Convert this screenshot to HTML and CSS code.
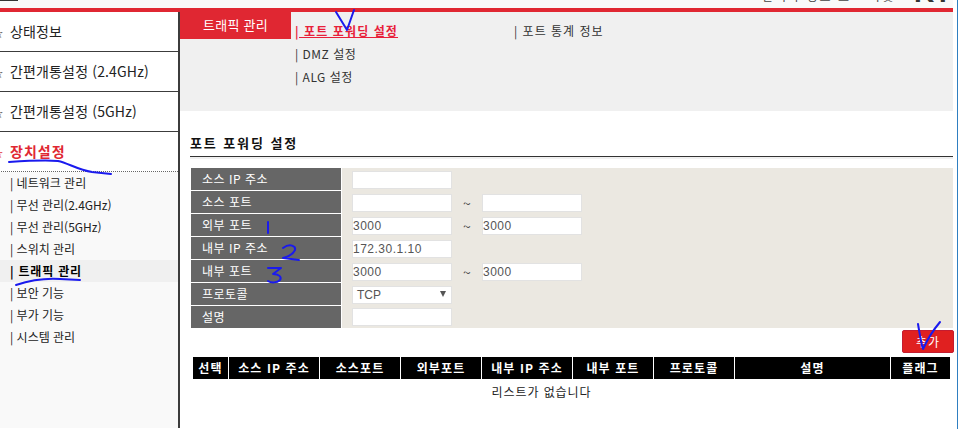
FILE: index.html
```html
<!DOCTYPE html>
<html lang="ko">
<head>
<meta charset="utf-8">
<title>포트 포워딩 설정</title>
<link rel="stylesheet" href="styles.css">
</head>
<body>
<div class="page">
  <header class="topstrip">
    <span class="tbar"></span>
    <span class="tmid">공유기 관리 도구 설정 페이지 안내 메뉴</span>
    <span class="tright">관리자 정보 로그 아웃</span>
    <span class="tlogo">KT</span>
  </header>
  <div class="redbar"></div>
  <div class="main">
    <aside class="side">
      <div class="sitem"><span class="star">☆</span>상태정보</div>
      <div class="sitem"><span class="star">☆</span>간편개통설정 (2.4GHz)</div>
      <div class="sitem"><span class="star">☆</span>간편개통설정 (5GHz)</div>
      <div class="sitem active"><span class="star">☆</span>장치설정</div>
      <ul class="sub">
        <li>| 네트워크 관리</li>
        <li>| 무선 관리(2.4GHz)</li>
        <li>| 무선 관리(5GHz)</li>
        <li>| 스위치 관리</li>
        <li class="cur">| 트래픽 관리</li>
        <li>| 보안 기능</li>
        <li>| 부가 기능</li>
        <li>| 시스템 관리</li>
      </ul>
    </aside>
    <main class="content">
      <section class="tabs">
        <div class="tabtitle">트래픽 관리</div>
        <div class="tabcol">
          <a class="tablink on">| 포트 포워딩 설정</a>
          <a class="tablink">| DMZ 설정</a>
          <a class="tablink">| ALG 설정</a>
        </div>
        <div class="tabcol second">
          <a class="tablink">| 포트 통계 정보</a>
        </div>
      </section>
      <section class="body">
        <h2 class="heading">포트 포워딩 설정</h2>
        <div class="form">
          <div class="frow"><div class="flabel">소스 IP 주소</div><div class="fval"><span class="inp"></span></div></div>
          <div class="frow"><div class="flabel">소스 포트</div><div class="fval"><span class="inp"></span><span class="tilde">~</span><span class="inp"></span></div></div>
          <div class="frow"><div class="flabel">외부 포트</div><div class="fval"><span class="inp">3000</span><span class="tilde">~</span><span class="inp">3000</span></div></div>
          <div class="frow"><div class="flabel">내부 IP 주소</div><div class="fval"><span class="inp">172.30.1.10</span></div></div>
          <div class="frow"><div class="flabel">내부 포트</div><div class="fval"><span class="inp">3000</span><span class="tilde">~</span><span class="inp">3000</span></div></div>
          <div class="frow"><div class="flabel">프로토콜</div><div class="fval"><span class="inp sel">TCP<i class="arrow"></i></span></div></div>
          <div class="frow last"><div class="flabel">설명</div><div class="fval"><span class="inp"></span></div></div>
        </div>
        <div class="actions"><button class="add">추가</button></div>
        <div class="thead">
          <div class="c1">선택</div><div class="c2">소스 IP 주소</div><div class="c3">소스포트</div><div class="c3">외부포트</div><div class="c2">내부 IP 주소</div><div class="c3">내부 포트</div><div class="c3">프로토콜</div><div class="c4">설명</div><div class="c5">플래그</div>
        </div>
        <p class="empty">리스트가 없습니다</p>
      </section>
    </main>
  </div>
  <svg class="ink" width="958" height="429" viewBox="0 0 958 429" fill="none" stroke="#1a1aee" stroke-width="2" stroke-linecap="round" stroke-linejoin="round">
    <path d="M336 12 L347 30 L354 10"/>
    <path d="M9 162 C25 161 45 160 58 161 C68 163 78 170 92 172 L111 174"/>
    <path d="M16 285 C28 281 45 278 60 279 L80 280"/>
    <path d="M268 222 L268 233"/>
    <path d="M283 248 C290 243 296 246 295 250 C293 254 287 257 283 258 L299 260"/>
    <path d="M268 268 L281 268 L273 274 C279 274 282 277 280 280 C277 283 271 283 268 281"/>
    <path d="M918 324 C920 336 922 346 923 349 C928 338 935 328 940 322"/>
  </svg>
</div>
</body>
</html>
```
FILE: styles.css
```css
* { box-sizing: border-box; }
html, body { margin: 0; padding: 0; background: #fff; overflow: hidden; }
body { font-family: "Noto Sans CJK KR", "Liberation Sans", sans-serif; color: #333; }
.page { position: relative; width: 958px; height: 429px; overflow: hidden; border-right: 1px solid #2f7fc1; }
.topstrip { position: relative; height: 8px; width: 953px; background: #f9f9f9; overflow: hidden; }
.tbar { position: absolute; left: 0; top: 0; width: 18px; height: 1px; background: #333; }
.tmid { position: absolute; left: 435px; top: -14px; width: 198px; font-size: 12px; line-height: 15px; color: #ccc; white-space: nowrap; overflow: hidden; letter-spacing: 1px; }
.tright { position: absolute; left: 762px; top: -12px; font-size: 12px; line-height: 15px; color: #444; white-space: nowrap; letter-spacing: 2px; }
.tlogo { position: absolute; left: 914px; top: -17px; font-family: "Liberation Sans", sans-serif; font-size: 28px; font-weight: 700; line-height: 20px; color: #333; }
.redbar { height: 4px; width: 953px; background: #e02732; }
.main { display: flex; height: 416px; }
.side { width: 180px; flex: none; border-right: 2px solid #3c3c3c; background: #fff; overflow: hidden; display: flex; flex-direction: column; }
.sitem { flex: none; height: 40px; border-bottom: 1px solid #3c3c3c; font-size: 14px; line-height: 39px; color: #222; white-space: nowrap; margin-left: -6px; letter-spacing: 0.15px; }
.star { display: inline-block; width: 16px; font-size: 9px; letter-spacing: 0; color: #333; }
.sitem.active { color: #e02732; font-weight: 700; border-bottom: 1px dotted #666; letter-spacing: 1px; }
.sitem.active .star { color: #e02732; }
.sub { list-style: none; margin: 0; padding: 0; background: #f9f9f9; flex: 1; }
.sub li { height: 22px; line-height: 22px; font-size: 12px; padding-left: 10px; color: #222; white-space: nowrap; }
.sub li.cur { background: #f0f0f0; font-weight: 700; color: #000; letter-spacing: 0.8px; }
.content { width: 773px; flex: none; }
.tabs { display: flex; height: 99px; background: #f0f0f0; }
.tabtitle { width: 111px; height: 27px; background: #e02732; color: #fff; font-size: 13px; line-height: 26px; text-align: center; flex: none; letter-spacing: 0.3px; }
.tabcol { display: flex; flex-direction: column; padding: 7px 0 0 4px; width: 219px; }
.tablink { height: 23px; line-height: 23px; font-size: 12px; color: #333; white-space: nowrap; letter-spacing: 0.5px; }
.tablink.on { color: #e8203a; font-weight: 700; text-decoration: underline; letter-spacing: 1.1px; }
.second .tablink { letter-spacing: 1px; }
.body { padding-left: 10px; }
.heading { margin: 22px 0 0; height: 24px; font-size: 13px; line-height: 20px; font-weight: 700; color: #111; border-bottom: 1px solid #333; box-shadow: 0 2px 0 #f0f0f0; letter-spacing: 1.9px; }
.form { margin: 11px 0 0 1px; }
.frow { display: flex; height: 23px; }
.frow.last { height: 22px; }
.flabel { width: 150px; height: 22px; background: #666; color: #fff; font-size: 12px; line-height: 21px; padding-left: 11px; margin-right: 1px; flex: none; letter-spacing: 0.5px; }
.fval { flex: 1; background: #ebe8e1; display: flex; align-items: center; padding-left: 10px; }
.inp { display: block; width: 100px; height: 18px; background: #fff; border: 1px solid #e2e2e2; font-size: 12px; line-height: 16px; color: #555; font-family: "Liberation Sans", sans-serif; letter-spacing: 0.5px; position: relative; }
.sel { padding-left: 4px; letter-spacing: 0; }
.arrow { position: absolute; right: 5px; top: 4px; width: 0; height: 0; border-left: 3px solid transparent; border-right: 3px solid transparent; border-top: 6px solid #555; }
.tilde { width: 30px; text-align: center; font-size: 14px; line-height: 16px; color: #444; }
.actions { display: flex; justify-content: flex-end; margin: 2px -1px 0 0; height: 24px; }
.add { width: 52px; height: 23px; padding: 0; background: #e02020; border: 1px solid #c41c30; border-radius: 2px; color: #fff; font-family: inherit; font-size: 12px; letter-spacing: 1px; }
.thead { display: flex; gap: 1px; margin: 3px 0 0 3px; height: 22px; font-size: 12px; font-weight: 700; line-height: 21px; color: #fff; text-align: center; white-space: nowrap; letter-spacing: 1.1px; }
.thead div { background: #000; flex: none; }
.c1 { width: 35px; } .c2 { width: 90px; } .c3 { width: 80px; } .c4 { width: 155px; } .c5 { width: 59px; }
.empty { margin: 3px 0 0; text-align: center; width: 703px; font-size: 12px; line-height: 20px; color: #222; letter-spacing: 0.9px; }
.ink { position: absolute; left: 0; top: 0; pointer-events: none; }
```
